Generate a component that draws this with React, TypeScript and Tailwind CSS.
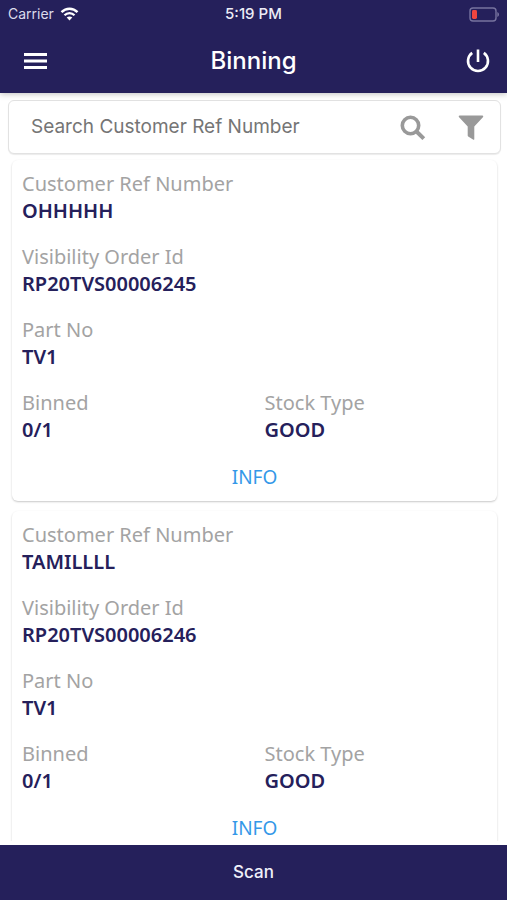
import React, { useState } from "react";

type Order = {
  customerRef: string;
  orderId: string;
  partNo: string;
  binned: string;
  stockType: string;
};

const orders: Order[] = [
  {
    customerRef: "OHHHHH",
    orderId: "RP20TVS00006245",
    partNo: "TV1",
    binned: "0/1",
    stockType: "GOOD",
  },
  {
    customerRef: "TAMILLLL",
    orderId: "RP20TVS00006246",
    partNo: "TV1",
    binned: "0/1",
    stockType: "GOOD",
  },
];

const StatusBar: React.FC = () => (
  <div className="grid h-7 grid-cols-3 items-center px-2 text-sm">
    <div className="flex items-center gap-1.5 text-[#dcdcec]">
      <span>Carrier</span>
      <svg width="19" height="14" viewBox="0 0 18 14" fill="none" stroke="#fff">
        <path d="M1 5.2C5.5 0.6 12.5 0.6 17 5.2" strokeWidth="2.4" />
        <path d="M4 8.3C6.8 5.4 11.2 5.4 14 8.3" strokeWidth="2.2" />
        <path d="M9 13.6L6.2 10.6C7.8 9.1 10.2 9.1 11.8 10.6Z" fill="#fff" stroke="none" />
      </svg>
    </div>
    <span className="text-center text-[15px] font-medium text-[#ececf6]">5:19 PM</span>
    <svg className="justify-self-end" width="30" height="15" viewBox="0 0 30 15">
      <rect x="1" y="1" width="26" height="13" rx="3" fill="none" stroke="#77739f" strokeWidth="1.4" />
      <path d="M28.3 5V10C29.4 9.6 30 8.6 30 7.5C30 6.4 29.4 5.4 28.3 5Z" fill="#77739f" />
      <rect x="3" y="3" width="5" height="9" rx="1.4" fill="#f0453f" />
    </svg>
  </div>
);

const Field: React.FC<{ label: string; value: string }> = ({ label, value }) => (
  <div className="text-xl leading-[27px]">
    <dt className="text-[#a3a3a3]">{label}</dt>
    <dd className="font-semibold text-[#25205b]">{value}</dd>
  </div>
);

const OrderCard: React.FC<{ order: Order }> = ({ order }) => (
  <article className="rounded-md bg-white px-2.5 pt-2.5 pb-2 font-['Noto_Sans',sans-serif] shadow-[0_1px_2px_rgba(0,0,0,0.22)]">
    <dl className="grid grid-cols-2 gap-x-5 gap-y-[19px]">
      <div className="col-span-2">
        <Field label="Customer Ref Number" value={order.customerRef} />
      </div>
      <div className="col-span-2">
        <Field label="Visibility Order Id" value={order.orderId} />
      </div>
      <div className="col-span-2">
        <Field label="Part No" value={order.partNo} />
      </div>
      <Field label="Binned" value={order.binned} />
      <Field label="Stock Type" value={order.stockType} />
    </dl>
    <button className="mx-auto mt-[18px] block px-4 py-1 text-[19px] leading-6 text-[#3498e8]">
      INFO
    </button>
  </article>
);

const App: React.FC = () => {
  const [search, setSearch] = useState("");

  return (
    <div className="flex h-screen flex-col bg-white font-['Inter',sans-serif]">
      {/* Header */}
      <header className="z-10 bg-[#25205b] text-white shadow-[0_1px_6px_rgba(0,0,0,0.25)]">
        <StatusBar />
        <div className="grid h-[65px] grid-cols-[1fr_auto_1fr] items-center px-4">
          <button aria-label="Menu" className="justify-self-start p-2">
            <svg width="23" height="16" viewBox="0 0 23 16" fill="#fff">
              <rect width="23" height="3" />
              <rect y="6.5" width="23" height="3" />
              <rect y="13" width="23" height="3" />
            </svg>
          </button>
          <h1 className="text-2xl font-medium">Binning</h1>
          <button aria-label="Log out" className="justify-self-end">
            <svg width="26" height="26" viewBox="0 0 26 26" fill="none" stroke="#fff" strokeWidth="2.6">
              <path d="M13 1.5V14" />
              <path d="M7.2 4.9A10 10 0 1 0 18.8 4.9" />
            </svg>
          </button>
        </div>
      </header>

      {/* Search */}
      <form
        className="mt-[7px] mr-1.5 ml-2 flex h-[54px] shrink-0 items-center rounded-md border border-[#e2e2e2] bg-white pr-4 pl-[22px] shadow-[0_1px_1px_rgba(0,0,0,0.08)]"
        onSubmit={(e) => e.preventDefault()}
      >
        <input
          type="text"
          aria-label="Search Customer Ref Number"
          placeholder="Search Customer Ref Number"
          value={search}
          onChange={(e) => setSearch(e.target.value)}
          className="min-w-0 flex-1 text-[19px] text-[#555] outline-none placeholder:text-[#757575]"
        />
        <button type="submit" aria-label="Search">
          <svg width="26" height="26" viewBox="0 0 26 26" fill="none" stroke="#999">
            <circle cx="10.5" cy="11.5" r="8.2" strokeWidth="3.6" />
            <path d="M16.5 17.5L23.8 24.6" strokeWidth="4" />
          </svg>
        </button>
        <button type="button" aria-label="Filter" className="ml-8">
          <svg width="26" height="26" viewBox="0 0 26 26" fill="#999">
            <path d="M1.7 1.5H24.3C25.3 1.5 25.5 2.5 24.9 3.2L16.3 12.5V25C16.3 25.9 15.6 26 15 25.6L10.2 22.6C9.8 22.3 9.7 22 9.7 21.6V12.5L1.1 3.2C0.5 2.5 0.7 1.5 1.7 1.5Z" />
          </svg>
        </button>
      </form>

      {/* Orders */}
      <main className="my-1 flex min-h-0 flex-1 flex-col gap-2.5 overflow-hidden pt-0.5 pr-2.5 pl-3">
        {orders.map((order) => (
          <OrderCard key={order.orderId} order={order} />
        ))}
      </main>

      <button className="h-[55px] shrink-0 bg-[#25205b] text-[17px] font-medium text-[#f0f0fa]">
        Scan
      </button>
    </div>
  );
};

export default App;
